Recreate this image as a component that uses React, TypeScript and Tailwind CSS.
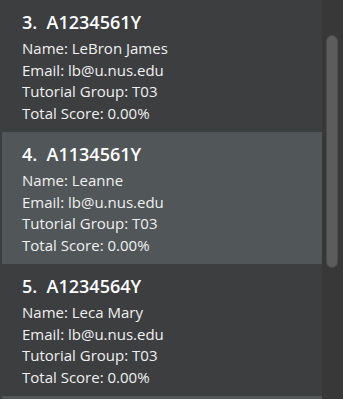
import React from "react";

const people = [
  { idx: 3, id: "A1234561Y", name: "LeBron James" },
  { idx: 4, id: "A1134561Y", name: "Leanne" },
  { idx: 5, id: "A1234564Y", name: "Leca Mary" },
];

export default function App() {
  return (
    <div
      className="w-[343px] h-[399px] overflow-hidden flex bg-[#383838]"
      style={{ fontFamily: '"Open Sans", "Noto Sans", sans-serif' }}
    >
      <div className="w-[322px] h-[399px] overflow-hidden flex flex-col bg-[#3c3e3f]">
        {people.map((p, i) => (
          <div
            key={p.idx}
            className={
              i % 2 === 1
                ? "shrink-0 h-[132px] pt-[11px] pl-[20px] ml-[2px] bg-[#515658]"
                : "shrink-0 h-[132px] pt-[11px] pl-[22px] bg-[#3c3e3f]"
            }
          >
            <div className="text-[18px] leading-[22px] font-semibold text-white whitespace-pre">
              {p.idx + ".  " + p.id}
            </div>
            <div className="mt-[5px] text-[15px] leading-[21.6px] text-[#f0f0f0]">
              <div>Name: {p.name}</div>
              <div>Email: lb@u.nus.edu</div>
              <div>Tutorial Group: T03</div>
              <div>Total Score: 0.00%</div>
            </div>
          </div>
        ))}
        <div className="shrink-0 h-[3px] ml-[2px] bg-[#515658]" />
      </div>
      <div className="w-[21px] h-[399px] bg-[#383838] pt-[35px] pl-[4px]">
        <div className="w-[12px] h-[233px] rounded-full bg-[#5c5c5c] border border-[#4a4a4a]" />
      </div>
    </div>
  );
}
